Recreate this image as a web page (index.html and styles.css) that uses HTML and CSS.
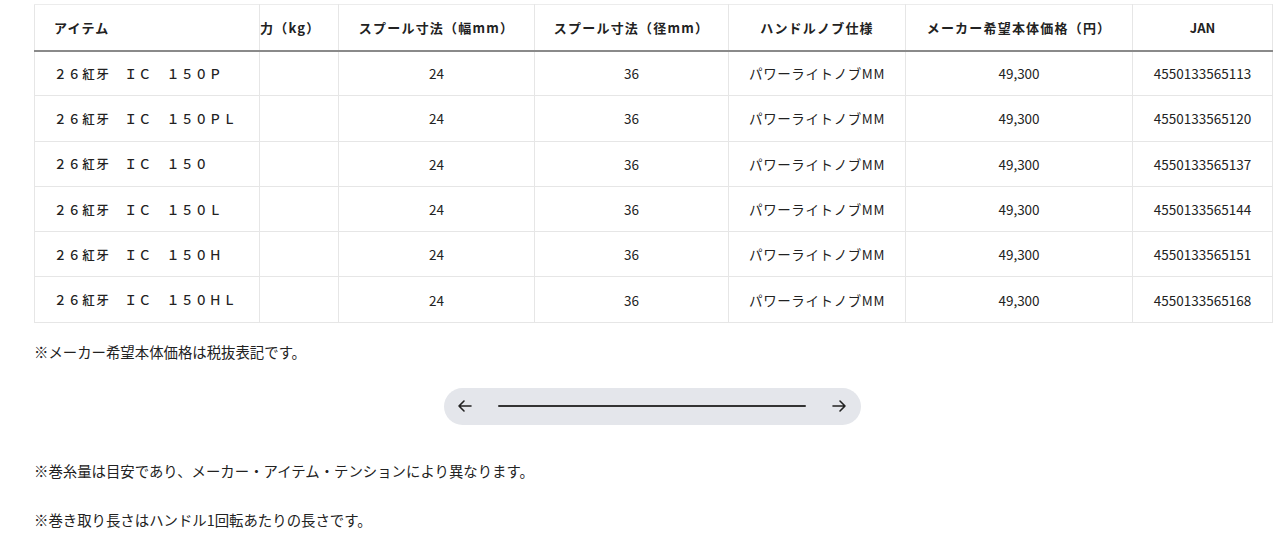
FILE: index.html
```html
<!DOCTYPE html>
<html lang="ja">
<head>
<meta charset="utf-8">
<link rel="stylesheet" href="styles.css">
</head>
<body>
<div class="page">
  <div class="table-wrap">
    <table class="spec">
      <thead>
        <tr>
          <th class="c-item">アイテム</th>
          <th class="c-drag">力（kg）</th>
          <th class="c-w">スプール寸法（幅mm）</th>
          <th class="c-d">スプール寸法（径mm）</th>
          <th class="c-knob">ハンドルノブ仕様</th>
          <th class="c-price">メーカー希望本体価格（円）</th>
          <th class="c-jan">JAN</th>
        </tr>
      </thead>
      <tbody>
        <tr><td class="c-item">２６紅牙　ＩＣ　１５０Ｐ</td><td></td><td>24</td><td>36</td><td class="kana">パワーライトノブMM</td><td>49,300</td><td>4550133565113</td></tr>
        <tr><td class="c-item">２６紅牙　ＩＣ　１５０ＰＬ</td><td></td><td>24</td><td>36</td><td class="kana">パワーライトノブMM</td><td>49,300</td><td>4550133565120</td></tr>
        <tr><td class="c-item">２６紅牙　ＩＣ　１５０</td><td></td><td>24</td><td>36</td><td class="kana">パワーライトノブMM</td><td>49,300</td><td>4550133565137</td></tr>
        <tr><td class="c-item">２６紅牙　ＩＣ　１５０Ｌ</td><td></td><td>24</td><td>36</td><td class="kana">パワーライトノブMM</td><td>49,300</td><td>4550133565144</td></tr>
        <tr><td class="c-item">２６紅牙　ＩＣ　１５０Ｈ</td><td></td><td>24</td><td>36</td><td class="kana">パワーライトノブMM</td><td>49,300</td><td>4550133565151</td></tr>
        <tr><td class="c-item">２６紅牙　ＩＣ　１５０ＨＬ</td><td></td><td>24</td><td>36</td><td class="kana">パワーライトノブMM</td><td>49,300</td><td>4550133565168</td></tr>
      </tbody>
    </table>
  </div>
  <p class="note note-price">※メーカー希望本体価格は税抜表記です。</p>
  <div class="scroller-row">
    <div class="scroller">
      <svg class="arrow" width="16" height="16" viewBox="0 0 16 16"><path d="M14 8H2M7 3L2 8l5 5" fill="none" stroke="#222" stroke-width="1.6" stroke-linecap="round" stroke-linejoin="round"/></svg>
      <div class="track"></div>
      <svg class="arrow" width="16" height="16" viewBox="0 0 16 16"><path d="M2 8h12M9 3l5 5-5 5" fill="none" stroke="#222" stroke-width="1.6" stroke-linecap="round" stroke-linejoin="round"/></svg>
    </div>
  </div>
  <p class="note note-1">※巻糸量は目安であり、メーカー・アイテム・テンションにより異なります。</p>
  <p class="note note-2">※巻き取り長さはハンドル1回転あたりの長さです。</p>
</div>
</body>
</html>
```

FILE: styles.css
```css
* { box-sizing: border-box; }
html, body { margin: 0; padding: 0; background: #fff; }
body {
  font-family: "Noto Sans CJK JP", "Noto Sans", sans-serif;
  color: #222;
  font-size: 13px;
}
.page { padding: 4px 0 0 34px; width: 1280px; }
.spec {
  border-collapse: collapse;
  width: 1238px;
  table-layout: fixed;
}
.spec th, .spec td {
  border: 1px solid #e6e6e6;
  text-align: center;
  padding: 0;
  white-space: nowrap;
  overflow: hidden;
}
.spec th {
  height: 46px;
  font-weight: 700;
  font-size: 13px;
  letter-spacing: 1.2px;
  border-bottom: 2px solid #8a8a8a;
  border-top: 1px solid #ececec;
}
.spec td { height: 45.3px; font-size: 13.5px; }
.spec td.kana { letter-spacing: 0.6px; }
.spec .c-item { width: 225px; text-align: left; padding-left: 19px; }
.spec td.c-item { letter-spacing: 1.6px; font-size: 12.5px; font-weight: 500; color: #222; }
.spec .c-drag { width: 79px; text-align: left; padding-left: 0; }
.spec .c-w { width: 196px; }
.spec .c-d { width: 194px; }
.spec .c-knob { width: 177px; }
.spec .c-price { width: 227px; }
.spec .c-jan { width: 140px; letter-spacing: 0; }
.note { margin: 0; font-size: 14.4px; color: #222; }
.note-price { margin-top: 18px; }
.scroller-row { display: flex; padding-left: 410px; margin-top: 26px; }
.scroller {
  width: 417px;
  height: 37px;
  border-radius: 19px;
  background: #e4e6eb;
  display: flex;
  align-items: center;
  padding: 0 14px 0 13px;
  gap: 25px;
}
.track { flex: 1; height: 2px; background: #333; border-radius: 1px; }
.arrow { flex: none; }
.note-1 { margin-top: 35px; }
.note-2 { margin-top: 28px; }
```
